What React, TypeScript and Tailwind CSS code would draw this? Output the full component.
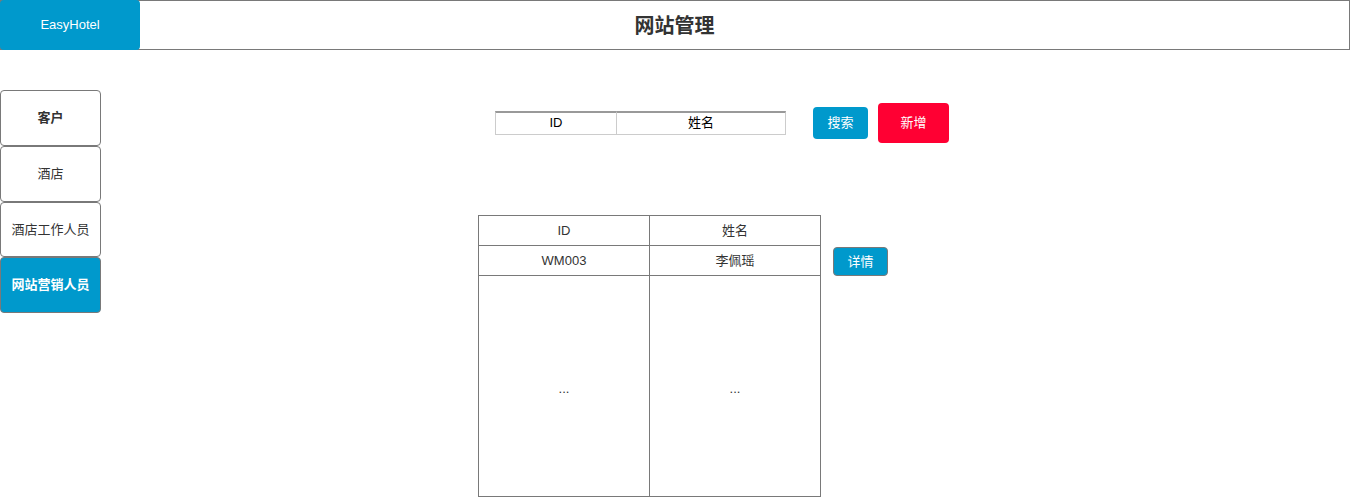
import React from "react";

const font = { fontFamily: '"Liberation Sans", Arial, "Noto Sans CJK SC", sans-serif' };

export default function App() {
  const side = [
    { t: "客户", h: "h-[56px]", active: false, bold: true },
    { t: "酒店", h: "h-[56px]", active: false, bold: false },
    { t: "酒店工作人员", h: "h-[55px]", active: false, bold: false },
    { t: "网站营销人员", h: "h-[56px]", active: true, bold: true },
  ];
  return (
    <div className="w-[1350px] h-[497px] bg-white overflow-hidden text-[#333]" style={font}>
      <header className="h-[50px] border border-[#797979] flex items-stretch relative">
        <div className="w-[140px] -ml-px -my-px bg-[#0099cc] rounded-[4px] flex items-center justify-center text-white text-[13px]">
          EasyHotel
        </div>
        <div className="flex-1 flex items-center justify-center pr-[140px] pt-[2px]">
          <span className="text-[20px] font-bold text-[#333]">网站管理</span>
        </div>
      </header>

      <div className="flex mt-[40px]">
        <nav className="w-[101px] flex flex-col">
          {side.map((s) => (
            <div
              key={s.t}
              className={`${s.h} border border-[#797979] rounded-[4px] flex items-center justify-center text-[13px] ${
                s.active ? "bg-[#0099cc] text-white" : "bg-white text-[#333]"
              } ${s.bold ? "font-bold" : ""}`}
            >
              {s.t}
            </div>
          ))}
        </nav>

        <main className="flex-1 flex flex-col">
          <div className="mt-[13px] h-[40px] flex items-center pl-[394px]">
            <div className="flex h-[24px] mt-[-1px]">
              <div className="w-[122px] border border-[#cccccc] border-t-2 border-t-[#999999] flex items-center justify-center text-[13px] text-black">
                ID
              </div>
              <div className="w-[169px] border border-l-0 border-[#cccccc] border-t-2 border-t-[#999999] flex items-center justify-center text-[13px] text-black">
                姓名
              </div>
            </div>
            <button className="ml-[27px] w-[55px] h-[32px] bg-[#0099cc] rounded-[4px] text-white text-[13px] flex items-center justify-center">
              搜索
            </button>
            <button className="ml-[10px] w-[71px] h-[40px] bg-[#ff0033] rounded-[4px] text-white text-[13px] flex items-center justify-center">
              新增
            </button>
          </div>

          <div className="mt-[72px] pl-[377px] flex items-start">
            <div className="w-[343px] h-[282px] border border-[#797979] grid grid-cols-[171px_1fr] grid-rows-[30px_30px_1fr] text-[13px] text-[#333]">
              <div className="border-r border-b border-[#797979] flex items-center justify-center">ID</div>
              <div className="border-b border-[#797979] flex items-center justify-center">姓名</div>
              <div className="border-r border-b border-[#797979] flex items-center justify-center">WM003</div>
              <div className="border-b border-[#797979] flex items-center justify-center">李佩瑶</div>
              <div className="border-r border-[#797979] flex items-center justify-center pt-[6px]">...</div>
              <div className="flex items-center justify-center pt-[6px]">...</div>
            </div>
            <button className="ml-[12px] mt-[32px] w-[55px] h-[29px] bg-[#0099cc] border border-[#797979] rounded-[4px] text-white text-[13px] flex items-center justify-center">
              详情
            </button>
          </div>
        </main>
      </div>
    </div>
  );
}
